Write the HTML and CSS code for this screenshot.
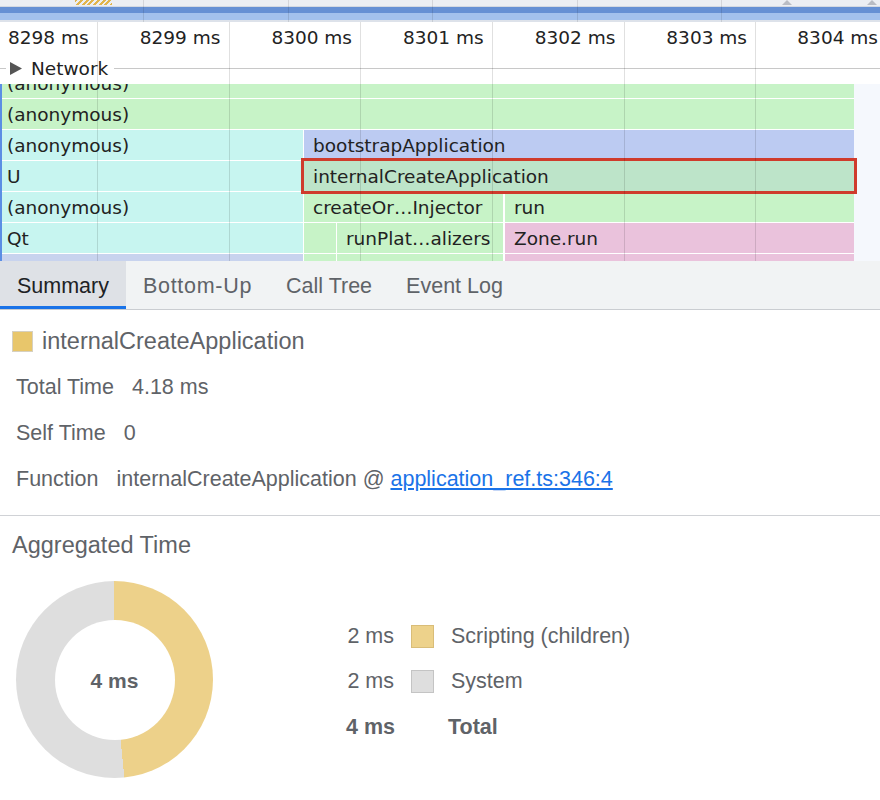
FILE: index.html
```html
<!DOCTYPE html>
<html>
<head>
<meta charset="utf-8">
<link rel="stylesheet" href="styles.css">
</head>
<body>
<div class="overview">
  <div class="ov-strip">
    <span class="ov-hatch"></span>
    <span class="ov-handle ov-handle-a"></span>
    <span class="ov-handle ov-handle-b"></span>
  </div>
  <div class="ov-bar-dark"></div>
  <div class="ov-bar-light"></div>
  <div class="ov-bottom"></div>
  <div class="ov-grid"><i></i><i></i><i></i><i></i><i></i></div>
</div>

<div class="timeline">
  <div class="ruler">
    <span class="tick tick-first">8298 ms</span>
    <span class="tick">8299 ms</span>
    <span class="tick">8300 ms</span>
    <span class="tick">8301 ms</span>
    <span class="tick">8302 ms</span>
    <span class="tick">8303 ms</span>
    <span class="tick tick-last">8304 ms</span>
  </div>
  <div class="network-row">
    <span class="net-label">
      <svg class="net-arrow" width="12" height="13" viewBox="0 0 12 13"><polygon points="0,0 12,6.5 0,13" fill="#555"/></svg>
      Network
    </span>
  </div>
  <div class="flame">
    <div class="frow frow-first">
      <span class="cell green edge w-full">(anonymous)</span>
    </div>
    <div class="frow">
      <span class="cell green edge w-full">(anonymous)</span>
    </div>
    <div class="frow">
      <span class="cell cyan edge w-left">(anonymous)</span>
      <span class="cell lavender w-right">bootstrapApplication</span>
    </div>
    <div class="frow">
      <span class="cell cyan edge w-left">U</span>
      <span class="cell selected w-right">internalCreateApplication</span>
    </div>
    <div class="frow">
      <span class="cell cyan edge w-left">(anonymous)</span>
      <span class="cell green w-mid">createOr…Injector</span>
      <span class="cell green w-tail">run</span>
    </div>
    <div class="frow">
      <span class="cell cyan edge w-left">Qt</span>
      <span class="cell green w-tiny"></span>
      <span class="cell green w-small">runPlat…alizers</span>
      <span class="cell pink w-tail">Zone.run</span>
    </div>
    <div class="frow">
      <span class="cell slate edge w-left">(anonymous)</span>
      <span class="cell green w-tiny"></span>
      <span class="cell green w-small">invokeTask</span>
      <span class="cell pink w-tail">_ZoneDelegate.invoke</span>
    </div>
  </div>
  <div class="grid-lines"><i></i><i></i><i></i><i></i><i></i><i></i></div>
</div>

<div class="tabs">
  <span class="tab active">Summary</span>
  <span class="tab tab-spaced">Bottom-Up</span>
  <span class="tab">Call Tree</span>
  <span class="tab">Event Log</span>
</div>

<div class="summary">
  <div class="title-row">
    <span class="title-swatch"></span>
    <span class="title-text">internalCreateApplication</span>
  </div>
  <div class="detail-row"><span class="d-label">Total Time</span><span>4.18 ms</span></div>
  <div class="detail-row"><span class="d-label">Self Time</span><span>0</span></div>
  <div class="detail-row"><span class="d-label">Function</span><span>internalCreateApplication @ <a class="link" href="#">application_ref.ts:346:4</a></span></div>
</div>

<div class="aggregated">
  <div class="agg-title">Aggregated Time</div>
  <div class="agg-body">
    <div class="donut"><div class="donut-hole">4 ms</div></div>
    <div class="legend">
      <span class="lg-val">2 ms</span><span class="lg-sw sw-script"></span><span class="lg-label">Scripting (children)</span>
      <span class="lg-val">2 ms</span><span class="lg-sw sw-system"></span><span class="lg-label">System</span>
      <span class="lg-val bold">4 ms</span><span></span><span class="lg-label bold total">Total</span>
    </div>
  </div>
</div>
</body>
</html>
```
FILE: styles.css
```css
* { box-sizing: border-box; }

html, body {
  margin: 0;
  padding: 0;
}

body {
  width: 880px;
  height: 800px;
  overflow: hidden;
  background: #ffffff;
  font-family: "Liberation Sans", Arial, sans-serif;
}

/* ---------- overview strip ---------- */
.overview {
  position: relative;
  height: 22px;
  overflow: hidden;
}

.ov-strip {
  position: relative;
  height: 7px;
  background: #eceef3;
  border-bottom: 1px solid #d4d9e2;
}

.ov-hatch {
  position: absolute;
  left: 75px;
  top: 0;
  width: 37px;
  height: 5px;
  background: repeating-linear-gradient(135deg, #e2b54c 0 2px, #eceef3 2px 4px);
}

.ov-handle {
  position: absolute;
  top: 0;
  width: 0;
  height: 0;
  border-left: 5px solid transparent;
  border-right: 5px solid transparent;
  border-bottom: 5px solid #b9bcc4;
}
.ov-handle-a { left: 782px; }
.ov-handle-b { left: 867px; }

.ov-bar-dark {
  height: 6px;
  background: #6690d4;
}

.ov-bar-light {
  height: 7px;
  background: #a3c1ed;
}

.ov-bottom {
  height: 2px;
  background: #dde2ea;
}

.ov-grid {
  position: absolute;
  inset: 0;
  display: flex;
  padding-left: 143px;
  pointer-events: none;
}
.ov-grid i {
  flex: none;
  width: 144.5px;
  border-left: 1px solid rgba(0, 0, 0, 0.1);
}

/* ---------- timeline ---------- */
.timeline {
  position: relative;
  font-family: "DejaVu Sans", Verdana, sans-serif;
  font-size: 18.5px;
  color: #222;
}

.ruler {
  display: flex;
  height: 30px;
  padding-top: 1px;
  line-height: 30px;
  color: #222;
  overflow: hidden;
}

.tick {
  flex: none;
  width: 131.67px;
  text-align: right;
  padding-right: 9px;
  white-space: nowrap;
}
.tick-first { width: 97.7px; }
.tick-last { width: 123px; padding-right: 1px; }

.network-row {
  height: 32px;
  background: linear-gradient(#c8c8c8, #c8c8c8) 0 16px / 100% 1px no-repeat;
}

.net-label {
  display: inline-flex;
  align-items: center;
  gap: 9px;
  height: 32px;
  margin-left: 6px;
  padding: 0 6px 0 4px;
  background: #fff;
}

.flame {
  height: 177px;
  overflow: hidden;
  border-left: 2px solid #5b8ee4;
  background: linear-gradient(to right, #ffffff 852px, #f5f8fd 852px);
}

.frow {
  display: flex;
  height: 30px;
  margin-bottom: 1px;
}
.frow-first { margin-top: -16px; }

.cell {
  flex: none;
  height: 30px;
  line-height: 32px;
  padding-left: 9px;
  white-space: nowrap;
  overflow: hidden;
  color: #222;
}
.cell.edge { padding-left: 5px; }

.w-full  { width: 852px; }
.w-left  { width: 301px; margin-right: 1px; }
.w-right { width: 550px; }
.w-mid   { width: 199px; margin-right: 2px; }
.w-tiny  { width: 32px; margin-right: 1px; }
.w-small { width: 166px; margin-right: 2px; }
.w-tail  { width: 349px; }

.green    { background: #c7f3c7; }
.cyan     { background: #c7f5f0; }
.lavender { background: #bccbf2; }
.pink     { background: #eac2dc; }
.slate    { background: #c8d3ee; }

.selected {
  position: relative;
  z-index: 1;
  background: #bde4c9;
  outline: 3px solid #cf3b2c;
}

.grid-lines {
  position: absolute;
  inset: 0;
  z-index: 2;
  display: flex;
  padding-left: 97px;
  overflow: hidden;
  pointer-events: none;
}
.grid-lines i {
  flex: none;
  width: 131.67px;
  border-left: 1px solid rgba(0, 0, 0, 0.12);
}

/* ---------- tabs ---------- */
.tabs {
  display: flex;
  height: 49px;
  background: #f1f3f4;
  border-bottom: 1px solid #cacdd1;
}

.tab {
  height: 48px;
  padding: 3px 17px 0;
  line-height: 45px;
  font-size: 21.5px;
  color: #5f6368;
  white-space: nowrap;
}

.tab-spaced { letter-spacing: 0.7px; }

.tab.active {
  background: #dee1e6;
  color: #202124;
  box-shadow: inset 0 -3px 0 #1a73e8;
}

/* ---------- summary ---------- */
.summary {
  padding: 8px 12px 13px;
  border-bottom: 1px solid #d0d2d6;
  color: #5f6368;
  font-size: 21.5px;
}

.title-row {
  display: flex;
  align-items: center;
  height: 46px;
}

.title-swatch {
  width: 21px;
  height: 21px;
  background: #e8c66b;
  border: 1px solid #d6d0c0;
  margin-right: 9px;
}

.title-text {
  font-size: 23.5px;
}

.detail-row {
  display: flex;
  align-items: center;
  height: 46px;
  padding-left: 4px;
  white-space: nowrap;
}

.d-label {
  margin-right: 18px;
}

.link {
  color: #1a73e8;
  text-decoration: underline;
}

/* ---------- aggregated ---------- */
.aggregated {
  padding: 14px 12px 0;
  color: #5f6368;
  font-size: 21.5px;
}

.agg-title {
  height: 30px;
  line-height: 30px;
  font-size: 23.5px;
}

.agg-body {
  display: flex;
  align-items: center;
  margin-top: 21px;
}

.donut {
  width: 197px;
  height: 197px;
  margin-left: 4px;
  border-radius: 50%;
  background: conic-gradient(#edd18a 0 48.4%, #dedede 48.4% 100%);
  display: flex;
  align-items: center;
  justify-content: center;
}

.donut-hole {
  width: 120px;
  height: 120px;
  padding-top: 2px;
  border-radius: 50%;
  background: #fff;
  display: flex;
  align-items: center;
  justify-content: center;
  font-weight: bold;
  font-size: 21px;
  color: #5f6368;
}

.legend {
  display: grid;
  grid-template-columns: 48px 23px auto;
  grid-auto-rows: 45.5px;
  column-gap: 17px;
  align-items: center;
  margin-left: 133px;
  padding-top: 4px;
}

.lg-val {
  text-align: right;
  white-space: nowrap;
}

.lg-sw {
  width: 23px;
  height: 23px;
  border: 1px solid;
}
.sw-script { background: #edd28b; border-color: #d9bd78; }
.sw-system { background: #dedede; border-color: #c4c4c4; }

.lg-label { white-space: nowrap; }
.bold { font-weight: bold; }
.total { margin-left: -3px; }
```
